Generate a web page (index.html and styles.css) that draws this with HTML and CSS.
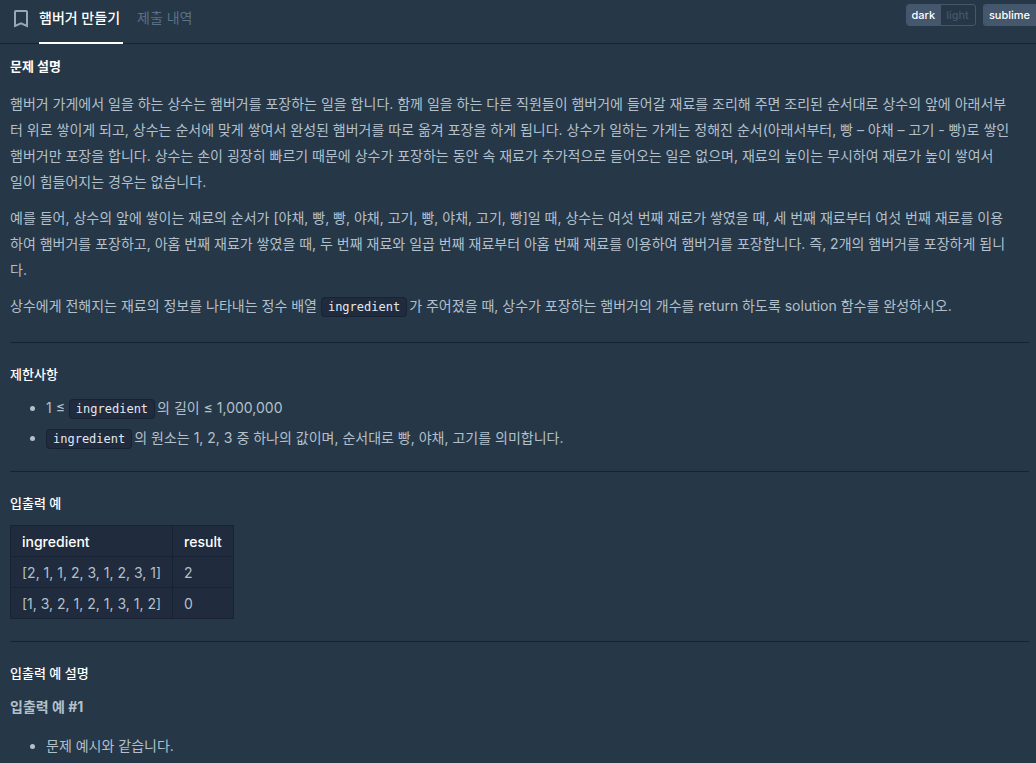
FILE: index.html
```
<!DOCTYPE html>
<html lang="ko">
  <head>
    <title>햄버거 만들기</title>
    <meta charset="UTF-8" />
    <meta name="viewport" content="width=device-width, initial-scale=1" />
    <link rel="stylesheet" href="styles.css">
  </head>

  <body>
    <header class="challenge-nav">
      <button class="bookmark" aria-label="북마크">
        <svg width="14" height="18" viewBox="0 0 14 18">
          <path d="M1 1.8 Q1 1 1.8 1 H12.2 Q13 1 13 1.8 V16 L7 13.4 L1 16 Z" />
        </svg>
      </button>
      <nav class="tabs">
        <a class="tab active" href="#">햄버거 만들기</a>
        <a class="tab" href="#">제출 내역</a>
      </nav>
      <div class="editor-options">
        <div class="btn-group">
          <button class="btn selected">dark</button>
          <button class="btn">light</button>
        </div>
        <div class="btn-group">
          <button class="btn selected">sublime</button>
        </div>
      </div>
    </header>

    <main class="markdown">
      <h6 class="guide-title">문제 설명</h6>
      <p>
        햄버거 가게에서 일을 하는 상수는 햄버거를 포장하는 일을 합니다. 함께 일을 하는 다른 직원들이 햄버거에 들어갈 재료를 조리해 주면 조리된 순서대로 상수의 앞에 아래서부<br>
        터 위로 쌓이게 되고, 상수는 순서에 맞게 쌓여서 완성된 햄버거를 따로 옮겨 포장을 하게 됩니다. 상수가 일하는 가게는 정해진 순서(아래서부터, 빵 – 야채 – 고기 - 빵)로 쌓인<br>
        햄버거만 포장을 합니다. 상수는 손이 굉장히 빠르기 때문에 상수가 포장하는 동안 속 재료가 추가적으로 들어오는 일은 없으며, 재료의 높이는 무시하여 재료가 높이 쌓여서<br>
        일이 힘들어지는 경우는 없습니다.
      </p>
      <p>
        예를 들어, 상수의 앞에 쌓이는 재료의 순서가 [야채, 빵, 빵, 야채, 고기, 빵, 야채, 고기, 빵]일 때, 상수는 여섯 번째 재료가 쌓였을 때, 세 번째 재료부터 여섯 번째 재료를 이용<br>
        하여 햄버거를 포장하고, 아홉 번째 재료가 쌓였을 때, 두 번째 재료와 일곱 번째 재료부터 아홉 번째 재료를 이용하여 햄버거를 포장합니다. 즉, 2개의 햄버거를 포장하게 됩니<br>
        다.
      </p>
      <p>상수에게 전해지는 재료의 정보를 나타내는 정수 배열 <code>ingredient</code>가 주어졌을 때, 상수가 포장하는 햄버거의 개수를 return 하도록 solution 함수를 완성하시오.</p>

      <hr>

      <h5>제한사항</h5>
      <ul>
        <li>1 ≤ <code>ingredient</code>의 길이 ≤ 1,000,000</li>
        <li><code>ingredient</code>의 원소는 1, 2, 3 중 하나의 값이며, 순서대로 빵, 야채, 고기를 의미합니다.</li>
      </ul>

      <hr>

      <h5>입출력 예</h5>
      <table>
        <thead>
          <tr>
            <th>ingredient</th>
            <th>result</th>
          </tr>
        </thead>
        <tbody>
          <tr>
            <td>[2, 1, 1, 2, 3, 1, 2, 3, 1]</td>
            <td>2</td>
          </tr>
          <tr>
            <td>[1, 3, 2, 1, 2, 1, 3, 1, 2]</td>
            <td>0</td>
          </tr>
        </tbody>
      </table>

      <hr>

      <h5>입출력 예 설명</h5>
      <p class="example-name"><strong>입출력 예 #1</strong></p>
      <ul>
        <li>문제 예시와 같습니다.</li>
      </ul>
    </main>
  </body>
</html>
```

FILE: styles.css
```
* {
  box-sizing: border-box;
}

body {
  margin: 0;
  background-color: #263747;
  color: #b2c0cc;
  font-family: Inter, "Noto Sans CJK KR", sans-serif;
  font-size: 14px;
  overflow: hidden;
}

/* top bar */
.challenge-nav {
  display: flex;
  height: 44px;
  padding-left: 14px;
  border-bottom: 1px solid #172334;
}

.bookmark {
  height: 38px;
  margin: 0 11px 0 0;
  padding: 0;
  border: 0;
  background: none;
}

.bookmark svg {
  display: block;
  fill: none;
  stroke: #98a8b9;
  stroke-width: 2;
}

.tabs {
  display: flex;
  gap: 14px;
}

.tab {
  height: 44px;
  color: #5b7186;
  font-weight: 500;
  line-height: 36px;
  text-decoration: none;
}

.tab:not(.active) {
  font-weight: 400;
}

.tab.active {
  min-width: 84px;
  border-bottom: 2px solid #fff;
  color: #fff;
}

.editor-options {
  display: flex;
  gap: 7px;
  margin-left: auto;
  padding-top: 4px;
}

.btn-group {
  display: flex;
  height: 22px;
  border: 1px solid #44576c;
  border-radius: 3px;
  overflow: hidden;
}

.editor-options .btn-group:last-child {
  border-right: 0;
  border-radius: 3px 0 0 3px;
}

.btn {
  padding: 0 6px 0 5px;
  border: 0;
  background: none;
  color: #44576c;
  font-family: inherit;
  font-size: 11px;
  font-weight: 500;
  line-height: 18px;
}

.btn.selected {
  background-color: #44576c;
  color: #fff;
}

/* problem description */
.markdown {
  padding: 9px 7px 0 10px;
}

h5,
h6 {
  margin: 0;
  color: #fff;
  font-size: 13px;
  font-weight: 500;
  line-height: 26px;
}

.guide-title {
  margin-bottom: 12px;
  font-weight: 700;
}

p {
  margin: 0 0 10px;
  line-height: 26px;
}

code {
  margin-right: 2px;
  padding: 2px 6px;
  border: 1px solid #172334;
  border-radius: 4px;
  background-color: #202b3d;
  color: #e2e8f0;
  font-family: "DejaVu Sans Mono", monospace;
  font-size: 12px;
  line-height: 1;
}

hr {
  margin: 20px 0 18px;
  border: 0;
  border-top: 1px solid #172334;
}

p + hr {
  margin-top: 23px;
}

ul {
  margin: 8px 0 20px;
  padding-left: 36px;
}

li {
  margin-bottom: 4px;
  line-height: 26px;
}

table {
  margin: 9px 0 22px;
  border-collapse: collapse;
  background-color: #202b3d;
}

th,
td {
  height: 31px;
  padding: 0 11px;
  border: 1px solid #172334;
  text-align: left;
}

th {
  color: #fff;
  font-weight: 500;
}

.example-name {
  margin: 8px 0 13px;
}
```
